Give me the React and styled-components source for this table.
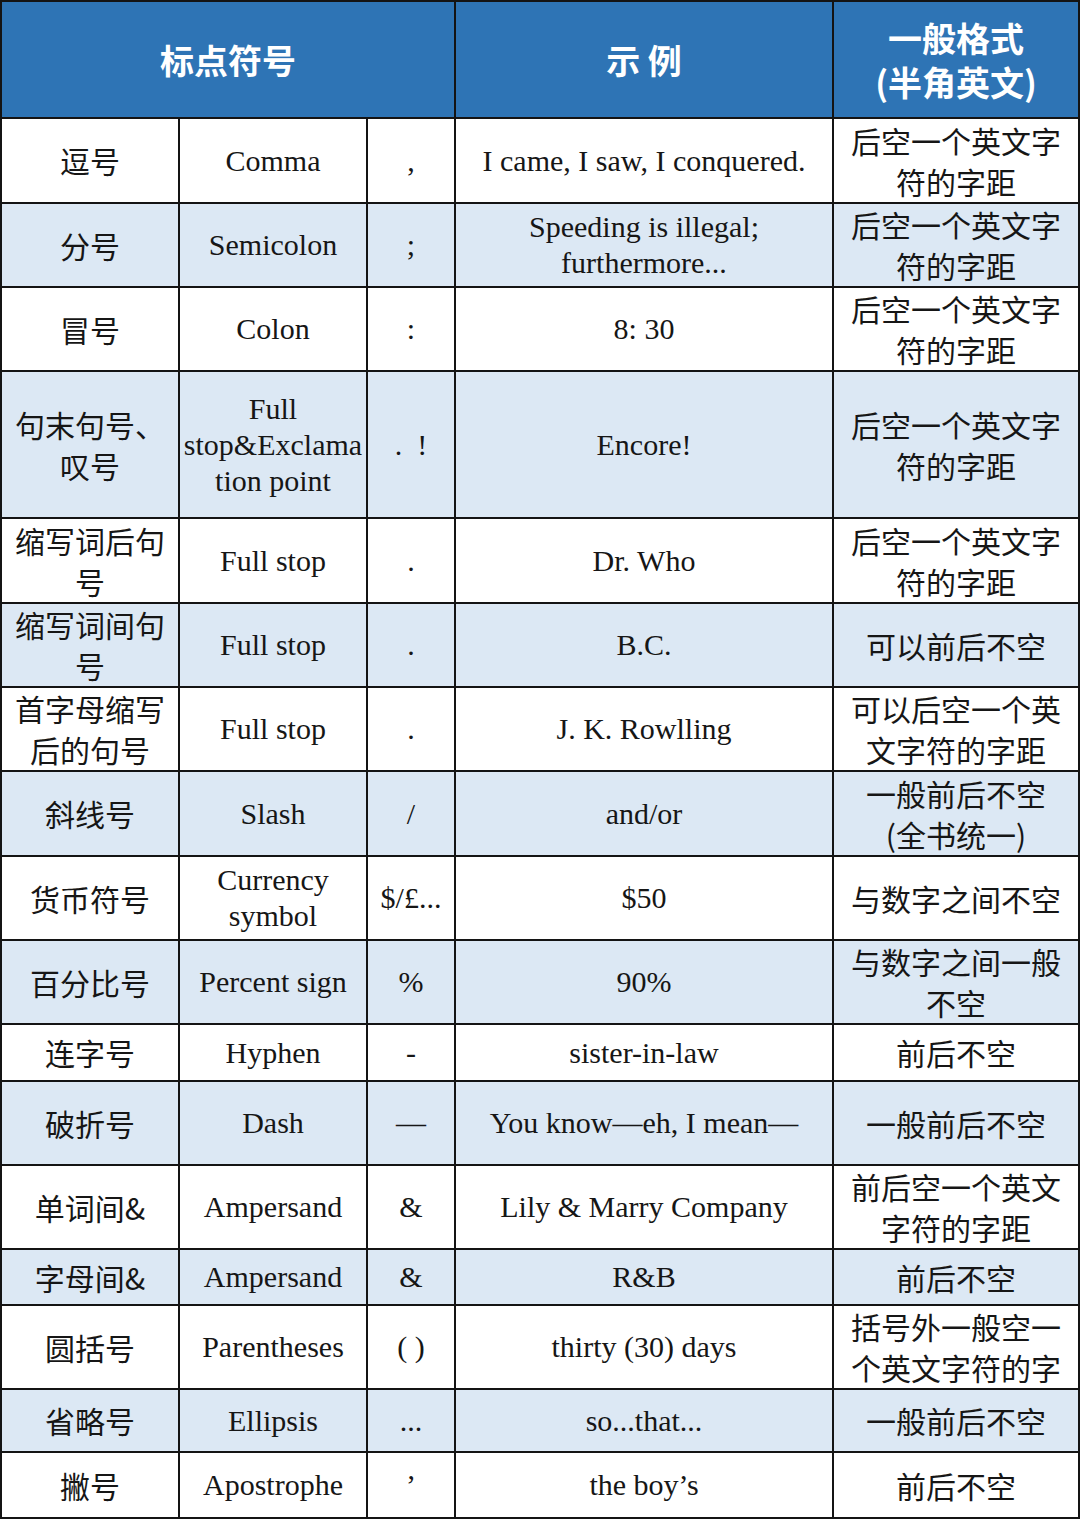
import React from 'react';
import styled, { createGlobalStyle } from 'styled-components';

const GlobalStyle = createGlobalStyle`
  html, body {
    margin: 0;
    padding: 0;
    background: #ffffff;
  }
  * {
    box-sizing: border-box;
  }
`;

const COLS = '178px 188px 88px 378px 246px';
const LINE = '#141414';

const Table = styled.div`
  width: 1080px;
  border-top: 2px solid ${LINE};
  border-left: 2px solid ${LINE};
  color: #161616;
`;

const Row = styled.div`
  display: grid;
  grid-template-columns: ${COLS};
  height: ${props => props.$h}px;
  background: ${props => (props.$shade ? '#dce8f4' : '#ffffff')};
`;

const HeaderRow = styled(Row)`
  background: #2e74b5;
`;

const Cell = styled.div`
  display: flex;
  align-items: ${props => (props.$top ? 'flex-start' : 'center')};
  justify-content: center;
  text-align: center;
  border-right: 2px solid ${LINE};
  border-bottom: 2px solid ${LINE};
  padding: 0 4px;
  overflow: hidden;
  white-space: pre-line;
  min-width: 0;
`;

const HeadCell = styled(Cell)`
  grid-column: span ${props => props.$span || 1};
  font-family: "Noto Sans CJK SC", "Noto Sans", sans-serif;
  font-size: 34px;
  font-weight: 700;
  line-height: 44px;
  color: #ffffff;
`;

const CnCell = styled(Cell)`
  font-family: "Noto Sans CJK SC", "Noto Sans", sans-serif;
  font-size: 30px;
  line-height: 41px;
  padding-left: 8px;
  padding-right: 8px;
`;

const EnCell = styled(Cell)`
  font-family: "Liberation Serif", "Times New Roman", serif;
  font-size: 30px;
  line-height: 36px;
  padding: 0 2px;
`;

const rows = [
  { cn: '逗号', en: 'Comma', sym: ',', ex: 'I came, I saw, I conquered.', fmt: '后空一个英文字\n符的字距', h: 85 },
  { cn: '分号', en: 'Semicolon', sym: ';', ex: 'Speeding is illegal;\nfurthermore...', fmt: '后空一个英文字\n符的字距', h: 84 },
  { cn: '冒号', en: 'Colon', sym: ':', ex: '8: 30', fmt: '后空一个英文字\n符的字距', h: 84 },
  { cn: '句末句号、\n叹号', en: 'Full\nstop&Exclama\ntion point', sym: '.\u00a0\u00a0!', ex: 'Encore!', fmt: '后空一个英文字\n符的字距', h: 147 },
  { cn: '缩写词后句\n号', en: 'Full stop', sym: '.', ex: 'Dr. Who', fmt: '后空一个英文字\n符的字距', h: 85 },
  { cn: '缩写词间句\n号', en: 'Full stop', sym: '.', ex: 'B.C.', fmt: '可以前后不空', h: 84 },
  { cn: '首字母缩写\n后的句号', en: 'Full stop', sym: '.', ex: 'J. K. Rowlling', fmt: '可以后空一个英\n文字符的字距', h: 84 },
  { cn: '斜线号', en: 'Slash', sym: '/', ex: 'and/or', fmt: '一般前后不空\n(全书统一)', h: 85 },
  { cn: '货币符号', en: 'Currency\nsymbol', sym: '$/£...', ex: '$50', fmt: '与数字之间不空', h: 84 },
  { cn: '百分比号', en: 'Percent sign', sym: '%', ex: '90%', fmt: '与数字之间一般\n不空', h: 84 },
  { cn: '连字号', en: 'Hyphen', sym: '-', ex: 'sister-in-law', fmt: '前后不空', h: 57 },
  { cn: '破折号', en: 'Dash', sym: '—', ex: 'You know—eh, I mean—', fmt: '一般前后不空', h: 84 },
  { cn: '单词间&', en: 'Ampersand', sym: '&', ex: 'Lily & Marry Company', fmt: '前后空一个英文\n字符的字距', h: 84 },
  { cn: '字母间&', en: 'Ampersand', sym: '&', ex: 'R&B', fmt: '前后不空', h: 56 },
  { cn: '圆括号', en: 'Parentheses', sym: '( )', ex: 'thirty (30) days', fmt: '括号外一般空一\n个英文字符的字', h: 84, top: true },
  { cn: '省略号', en: 'Ellipsis', sym: '...', ex: 'so...that...', fmt: '一般前后不空', h: 63 },
  { cn: '撇号', en: 'Apostrophe', sym: '’', ex: 'the boy’s', fmt: '前后不空', h: 66 },
];

const App = () => {
  return (
    <>
      <GlobalStyle />
      <Table>
        <HeaderRow $h={117}>
          <HeadCell $span={3}>标点符号</HeadCell>
          <HeadCell>示 例</HeadCell>
          <HeadCell>{'一般格式\n(半角英文)'}</HeadCell>
        </HeaderRow>
        {rows.map((r, i) => (
          <Row key={i} $h={r.h} $shade={i % 2 === 1}>
            <CnCell>{r.cn}</CnCell>
            <EnCell>{r.en}</EnCell>
            <EnCell>{r.sym}</EnCell>
            <EnCell>{r.ex}</EnCell>
            <CnCell $top={r.top}>{r.fmt}</CnCell>
          </Row>
        ))}
      </Table>
    </>
  );
};

export default App;
